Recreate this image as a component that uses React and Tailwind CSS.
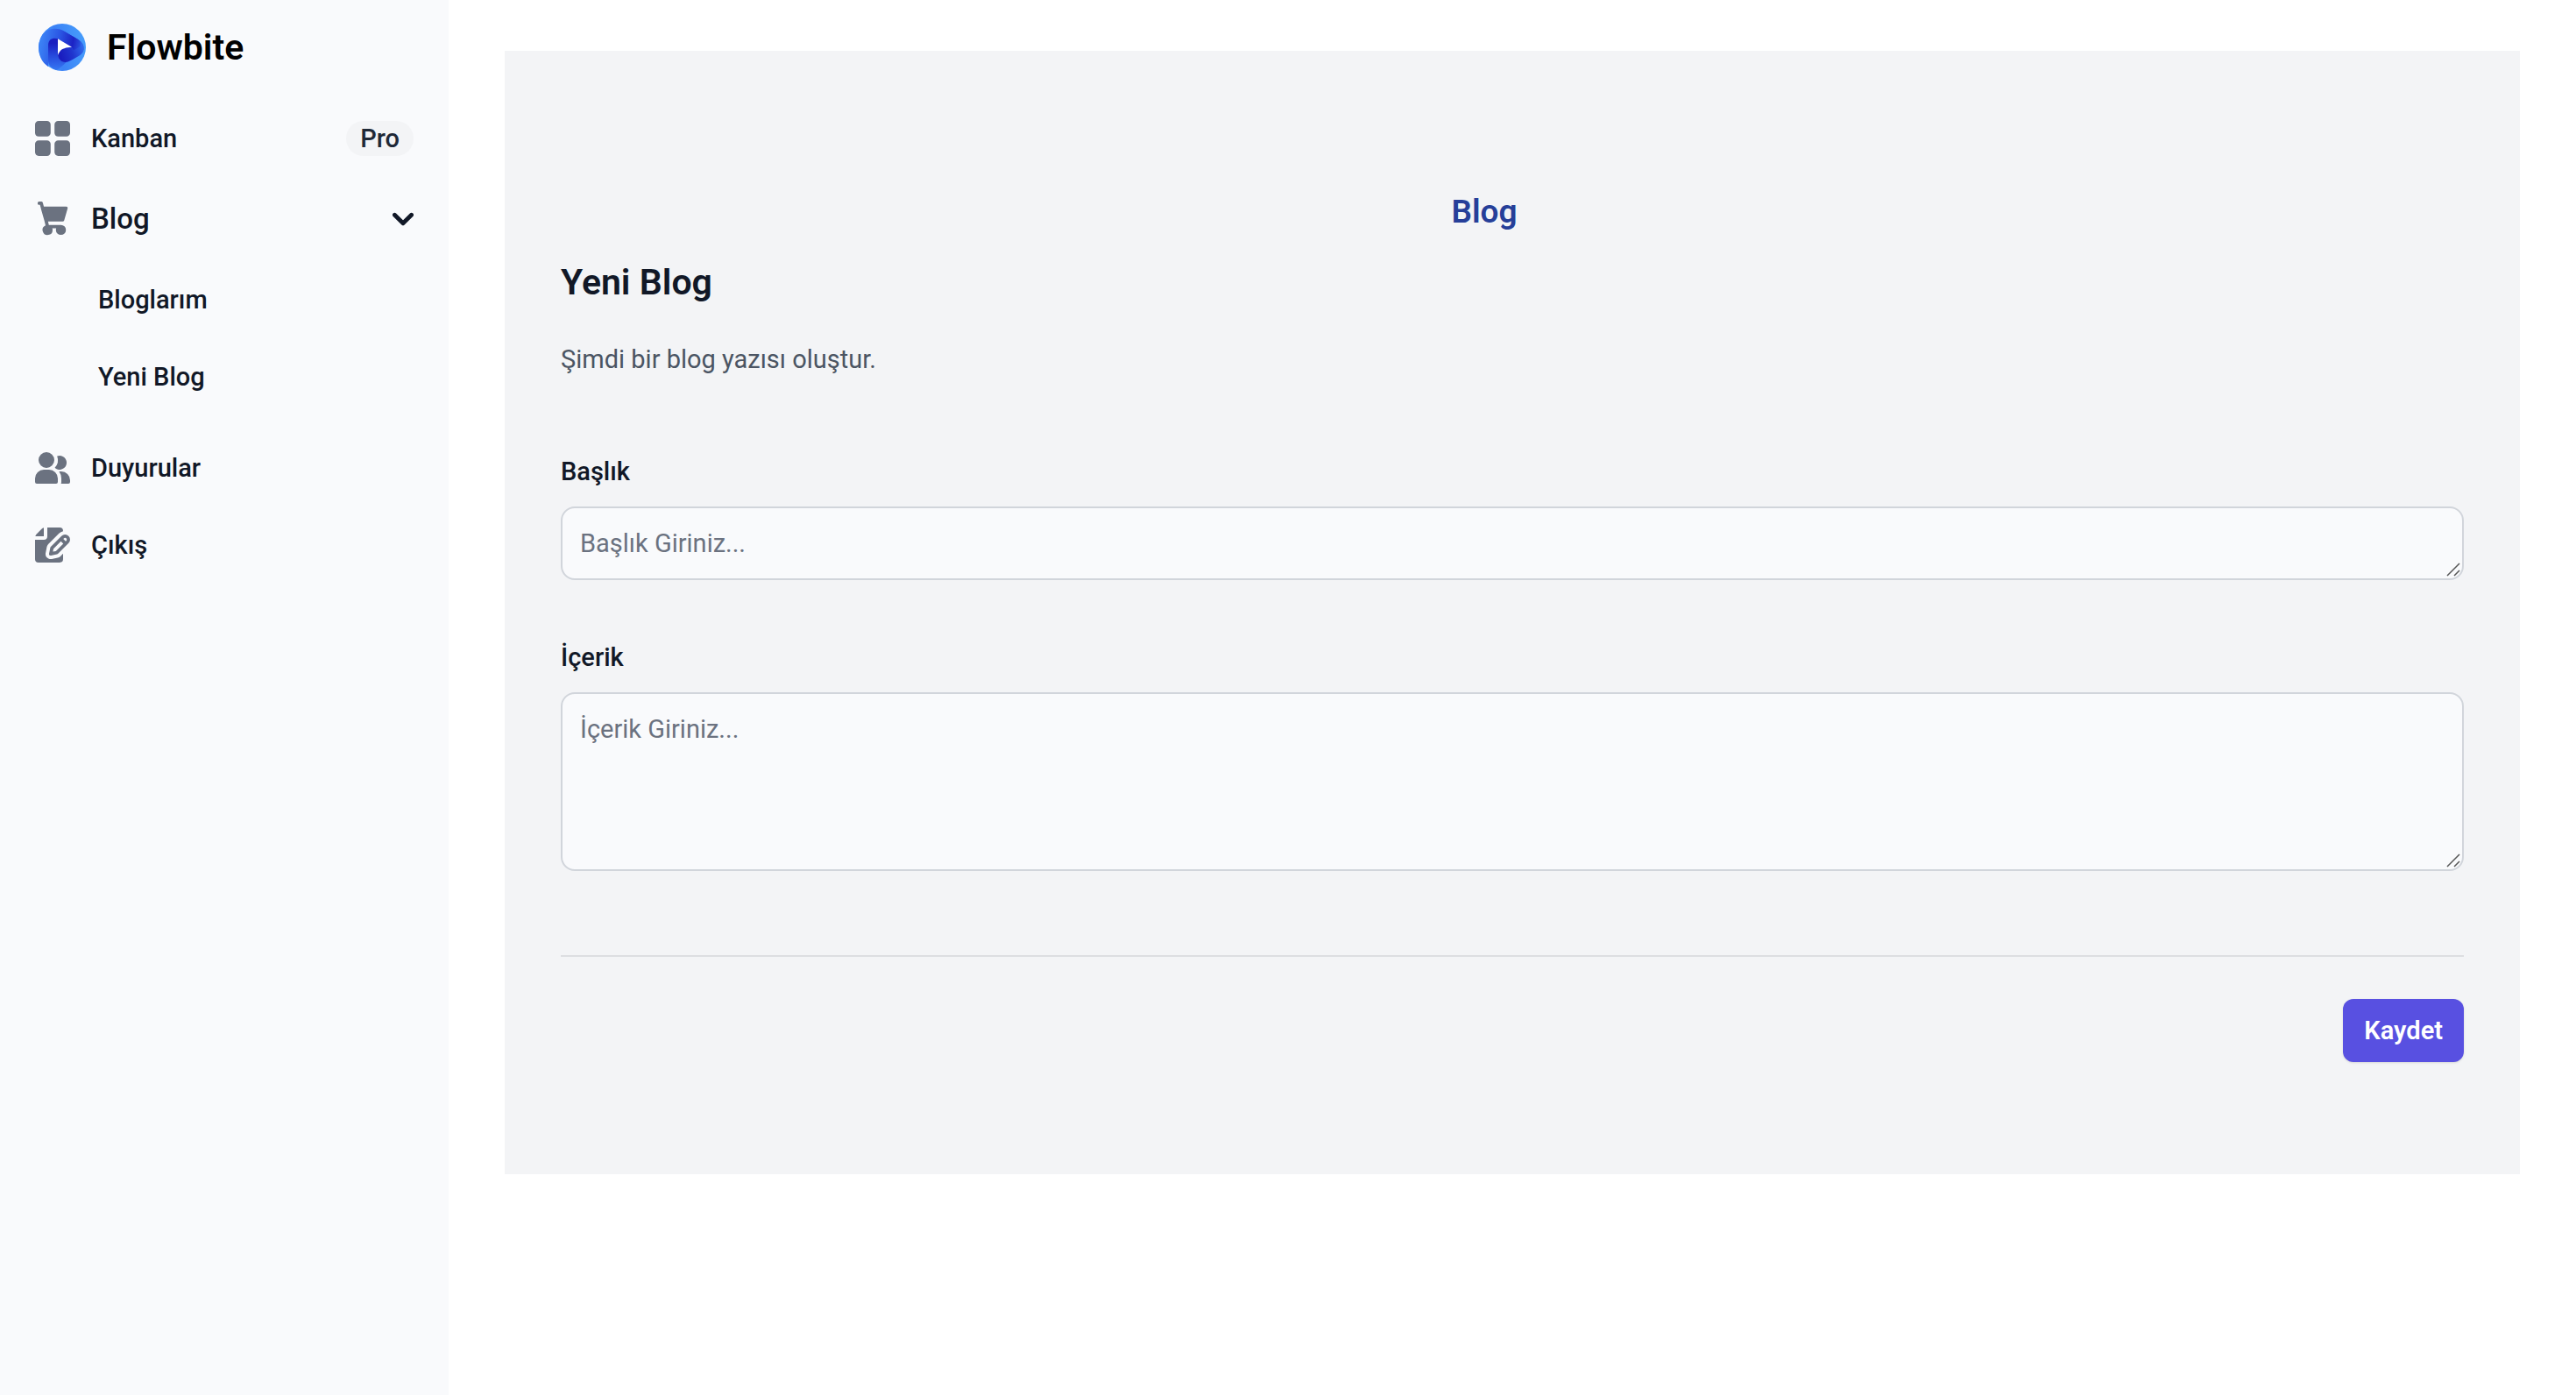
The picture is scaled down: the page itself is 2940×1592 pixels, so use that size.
const KANBAN = [
  'M6.143 0H1.857A1.857 1.857 0 0 0 0 1.857v4.286C0 7.169.831 8 1.857 8h4.286A1.857 1.857 0 0 0 8 6.143V1.857A1.857 1.857 0 0 0 6.143 0Zm10 0h-4.286A1.857 1.857 0 0 0 10 1.857v4.286C10 7.169 10.831 8 11.857 8h4.286A1.857 1.857 0 0 0 18 6.143V1.857A1.857 1.857 0 0 0 16.143 0Zm-10 10H1.857A1.857 1.857 0 0 0 0 11.857v4.286C0 17.169.831 18 1.857 18h4.286A1.857 1.857 0 0 0 8 16.143v-4.286A1.857 1.857 0 0 0 6.143 10Zm10 0h-4.286A1.857 1.857 0 0 0 10 11.857v4.286c0 1.026.831 1.857 1.857 1.857h4.286A1.857 1.857 0 0 0 18 16.143v-4.286A1.857 1.857 0 0 0 16.143 10Z',
];
const CART = [
  'M15 12a1 1 0 0 0 .962-.726l2-7A1 1 0 0 0 17 3H3.77L3.175.745A1 1 0 0 0 2.208 0H1a1 1 0 0 0 0 2h.438l.6 2.255v.019l2 7 .746 2.986A3 3 0 1 0 9 17a2.966 2.966 0 0 0-.184-1h2.368c-.118.32-.18.659-.184 1a3 3 0 1 0 3-3H6.78l-.5-2H15Z',
];
const USERS = [
  'M14 2a3.963 3.963 0 0 0-1.4.267 6.439 6.439 0 0 1-1.331 6.638A4 4 0 1 0 14 2Zm1 9h-1.264A6.957 6.957 0 0 1 15 15v2a2.97 2.97 0 0 1-.184 1H19a1 1 0 0 0 1-1v-1a5.006 5.006 0 0 0-5-5ZM6.5 9a4.5 4.5 0 1 0 0-9 4.5 4.5 0 0 0 0 9ZM8 10H5a5.006 5.006 0 0 0-5 5v2a1 1 0 0 0 1 1h11a1 1 0 0 0 1-1v-2a5.006 5.006 0 0 0-5-5Z',
];
const EDIT = [
  'M5 5V.13a2.96 2.96 0 0 0-1.293.749L.879 3.707A2.96 2.96 0 0 0 .13 5H5Z',
  'M6.737 11.061a2.961 2.961 0 0 1 .81-1.515l6.117-6.116A4.839 4.839 0 0 1 16 2.141V2a1.97 1.97 0 0 0-1.933-2H7v5a2 2 0 0 1-2 2H0v11a1.969 1.969 0 0 0 1.933 2h12.134A1.97 1.97 0 0 0 16 18v-3.093l-1.546 1.546c-.413.413-.94.695-1.513.81l-3.4.679a2.947 2.947 0 0 1-1.85-.227 2.96 2.96 0 0 1-1.635-3.257l.681-3.397Z',
  'M8.961 16a.93.93 0 0 0 .189-.019l3.4-.679a.961.961 0 0 0 .49-.263l6.118-6.117a2.884 2.884 0 0 0-4.079-4.078l-6.117 6.117a.96.96 0 0 0-.263.491l-.679 3.4A.961.961 0 0 0 8.961 16Zm7.477-9.8a.958.958 0 0 1 .68-.281.961.961 0 0 1 .682 1.644l-.315.315-1.36-1.36.313-.318Zm-5.911 5.911 4.236-4.236 1.359 1.359-4.236 4.237-1.7.339.341-1.699Z',
];

function Icon({ viewBox, paths }) {
  return (
    <svg className="size-10 shrink-0 text-[#6b7280]" viewBox={viewBox} fill="currentColor" aria-hidden="true">
      {paths.map((d) => (
        <path key={d} d={d} />
      ))}
    </svg>
  );
}

function Logo() {
  return (
    <svg className="h-14 w-[54px]" viewBox="0 0 162 168" aria-hidden="true">
      <defs>
        <linearGradient id="ring" x1="0" y1="0.7" x2="1" y2="0.5">
          <stop offset="0" stopColor="#4a9dfb" />
          <stop offset="0.45" stopColor="#3b82f6" />
          <stop offset="1" stopColor="#469cfb" />
        </linearGradient>
        <linearGradient id="band" gradientUnits="userSpaceOnUse" x1="10" y1="60" x2="155" y2="90">
          <stop offset="0" stopColor="#3b80f5" />
          <stop offset="0.4" stopColor="#2a55e3" />
          <stop offset="0.72" stopColor="#1c22c4" />
          <stop offset="1" stopColor="#3068ec" />
        </linearGradient>
        <linearGradient id="leg" gradientUnits="userSpaceOnUse" x1="60" y1="70" x2="62" y2="160">
          <stop offset="0" stopColor="#1a1fc0" />
          <stop offset="0.4" stopColor="#2443d9" />
          <stop offset="1" stopColor="#3576f2" />
        </linearGradient>
        <linearGradient id="core" gradientUnits="userSpaceOnUse" x1="75" y1="110" x2="152" y2="84">
          <stop offset="0" stopColor="#1a1dbf" />
          <stop offset="0.5" stopColor="#2036cf" />
          <stop offset="1" stopColor="#3068ec" />
        </linearGradient>
      </defs>
      <circle cx="81" cy="84" r="81" fill="url(#ring)" />
      <path d="M4 62C10 36 28 20 56 20C70 20 78 23 90 30L134 56C150 65 157 78 155 94L66 58C46 50 33 58 33 76V150C12 136 0 112 0 84C0 76 1 70 4 62Z" fill="url(#band)" />
      <path d="M33 76C33 60 42 53 56 53L66 55V108C66 126 80 138 96 134C82 146 72 158 60 162C44 156 33 145 33 130Z" fill="url(#leg)" />
      <path d="M66 55L92 40L134 60C150 66 158 80 154 96C150 108 136 116 106 131C84 142 66 128 66 108Z" fill="url(#core)" />
      <path d="M66 55L80 26L134 56C142 62 146 70 142 82L120 94L114 83Z" fill="url(#band)" />
      <path d="M66 55L114 83C94 84 80 88 73 98C69 103 67 107 66 112Z" fill="#fff" />
    </svg>
  );
}

function NavLink({ icon, children, badge }) {
  return (
    <a href="#" className="flex items-center rounded-2xl p-4 text-[#111827]">
      {icon}
      <span className="ml-6 flex-1 whitespace-nowrap">{children}</span>
      {badge && (
        <span className="rounded-full bg-gray-100 px-4 text-[#1f2937]">{badge}</span>
      )}
    </a>
  );
}

function Sidebar() {
  return (
    <aside className="w-[512px] shrink-0 bg-[#f9fafc] px-6 pt-[26px] text-[29px] leading-10 font-medium">
      <a href="#" className="mb-10 flex items-center gap-6 pl-5">
        <Logo />
        <span className="text-[41px] leading-14 font-semibold text-black">Flowbite</span>
      </a>
      <nav>
        <ul className="space-y-4">
          <li>
            <NavLink icon={<Icon viewBox="0 0 18 18" paths={KANBAN} />} badge="Pro">Kanban</NavLink>
          </li>
          <li>
            <button type="button" aria-expanded="true" className="flex w-full items-center rounded-2xl p-4 text-left text-[33px] leading-12 text-[#111827]">
              <Icon viewBox="0 0 18 21" paths={CART} />
              <span className="ml-6 flex-1">Blog</span>
              <svg className="size-6" viewBox="0 0 10 6" fill="none" stroke="currentColor" strokeWidth="2" strokeLinecap="round" strokeLinejoin="round" aria-hidden="true">
                <path d="m1 1 4 4 4-4" />
              </svg>
            </button>
            <ul className="space-y-4 py-4">
              <li>
                <a href="#" className="block rounded-2xl py-4 pr-4 pl-22 text-[#111827]">Bloglarım</a>
              </li>
              <li>
                <a href="#" className="block rounded-2xl py-4 pr-4 pl-22 text-[#111827]">Yeni Blog</a>
              </li>
            </ul>
          </li>
          <li>
            <NavLink icon={<Icon viewBox="0 0 20 18" paths={USERS} />}>Duyurular</NavLink>
          </li>
          <li>
            <NavLink icon={<Icon viewBox="0 0 20 20" paths={EDIT} />}>Çıkış</NavLink>
          </li>
        </ul>
      </nav>
    </aside>
  );
}

function Field({ id, label, placeholder, rows }) {
  return (
    <div>
      <label htmlFor={id} className="mb-5 block font-medium text-[#111827]">{label}</label>
      <div className="relative">
        <textarea
          id={id}
          rows={rows}
          placeholder={placeholder}
          className="block w-full resize-none rounded-2xl border-2 border-[#d1d5db] bg-[#f9fafc] p-5 text-[#111827] placeholder:text-[#6b7280]"
        />
        <svg className="pointer-events-none absolute right-1 bottom-1 size-4" viewBox="0 0 16 16" fill="none" stroke="#555" strokeWidth="1.5" aria-hidden="true">
          <path d="M1 15L15 1M9 15L15 9" />
        </svg>
      </div>
    </div>
  );
}

export default function App() {
  return (
    <div className="flex min-h-screen bg-white font-[Roboto,sans-serif]">
      <Sidebar />
      <main className="min-w-0 flex-1 px-16 pt-[58px]">
        <form className="bg-[#f3f4f6] px-16 pt-[156px] pb-32 text-[29px] leading-10" onSubmit={(e) => e.preventDefault()}>
          <h1 className="pr-16 text-center text-[37px] leading-14 font-semibold text-[#263f99]">Blog</h1>
          <h2 className="mt-6 text-[41px] leading-14 font-semibold text-[#111827]">Yeni Blog</h2>
          <p className="mt-10 text-[#4b5563]">Şimdi bir blog yazısı oluştur.</p>
          <div className="mt-22 space-y-17">
            <Field id="title" label="Başlık" placeholder="Başlık Giriniz..." rows={1} />
            <Field id="content" label="İçerik" placeholder="İçerik Giriniz..." rows={4} />
          </div>
          <hr className="mt-24 border-t-2 border-[#dcdee1]" />
          <div className="mt-12 flex justify-end">
            <button type="submit" className="rounded-xl bg-[#5850e1] px-6 py-4 font-semibold text-white shadow-sm">Kaydet</button>
          </div>
        </form>
      </main>
    </div>
  );
}
